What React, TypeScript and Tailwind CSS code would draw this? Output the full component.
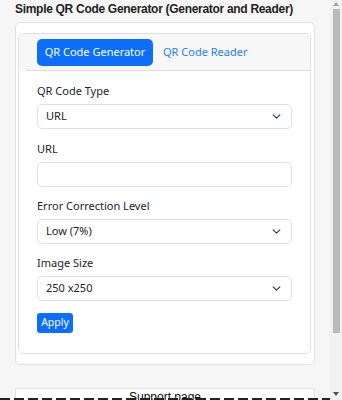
import React from "react";

const font = { fontFamily: '"Noto Sans", "Open Sans", sans-serif' };

function Chevron() {
  return (
    <svg width="9" height="9" viewBox="0 0 16 16" className="shrink-0">
      <path d="M2 5l6 6 6-6" fill="none" stroke="#343a40" strokeWidth="2" strokeLinecap="round" strokeLinejoin="round" />
    </svg>
  );
}

function SelectBox({ value }: { value: string }) {
  return (
    <div className="h-[25px] border border-[#dee2e6] rounded-[5px] bg-white flex items-center justify-between pl-[8px] pr-[10px] text-[11px] text-[#212529]">
      <span>{value}</span>
      <Chevron />
    </div>
  );
}

function Label({ children }: { children: React.ReactNode }) {
  return <div className="text-[11px] leading-[16px] text-[#212529] mb-[5px]">{children}</div>;
}

export default function App() {
  return (
    <div className="w-[342px] h-[400px] overflow-hidden bg-[#f6f6f6] flex relative">
      <div className="w-[330px] flex flex-col">
        <h1
          className="pl-[15px] pt-[1px] text-[12px] font-bold leading-[16px] text-[#222] whitespace-nowrap tracking-[-0.3px]"
          style={{ fontFamily: '"Liberation Sans", Arial, sans-serif' }}
        >
          Simple QR Code Generator (Generator and Reader)
        </h1>
        <div className="mx-[15px] mt-[5px] bg-white border border-[#e2e2e2] rounded-[5px] pt-[10px] pb-[10px] pl-[2px] pr-[3px]" style={font}>
          <div className="border border-[#e0e0e0] rounded-[6px] overflow-hidden">
            <div className="bg-[#f7f7f7] pl-[7px] pt-[5px]">
              <div className="border-b border-[#dcdcdc] flex items-center gap-[10px] pl-[11px] pb-[4px]">
                <div className="h-[27px] w-[116px] rounded-[5px] bg-[#0d6efd] text-white text-[11px] flex items-center justify-center">
                  QR Code Generator
                </div>
                <div className="text-[11px] text-[#2a7cf6]">QR Code Reader</div>
              </div>
            </div>
            <div className="px-[18px] pt-[12px] pb-[20px] bg-white">
              <Label>QR Code Type</Label>
              <SelectBox value="URL" />
              <div className="mt-[12px]">
                <Label>URL</Label>
                <div className="h-[25px] border border-[#dee2e6] rounded-[5px] bg-white" />
              </div>
              <div className="mt-[11px]">
                <Label>Error Correction Level</Label>
                <SelectBox value="Low (7%)" />
              </div>
              <div className="mt-[11px]">
                <Label>Image Size</Label>
                <SelectBox value="250 x250" />
              </div>
              <div className="mt-[12px] h-[20px] w-[36px] rounded-[3px] bg-[#0d6efd] text-white text-[10.5px] flex items-center justify-center">
                Apply
              </div>
            </div>
          </div>
        </div>
        <div
          className="mx-[15px] mt-[23px] h-[30px] bg-white border border-[#e2e2e2] flex justify-center pt-[1px] text-[12px] leading-[14px] text-[#111]"
          style={{ fontFamily: '"Liberation Sans", Arial, sans-serif' }}
        >
          Support page
        </div>
      </div>
      <div className="w-[12px] h-full bg-[#f1f1f1] flex flex-col items-center">
        <div className="h-[8px] flex items-center justify-center">
          <svg width="6" height="4" viewBox="0 0 6 4"><path d="M0 4L3 0L6 4Z" fill="#a3a3a3" /></svg>
        </div>
        <div className="w-[7px] h-[324px] mt-[1px] bg-[#b9b9b9]" />
        <div className="flex-1" />
        <div className="h-[12px] flex items-center justify-center">
          <svg width="6" height="4" viewBox="0 0 6 4"><path d="M0 0L3 4L6 0Z" fill="#505050" /></svg>
        </div>
      </div>
      <div className="absolute left-0 right-[12px] bottom-0 h-[2px] bg-[repeating-linear-gradient(90deg,#222_0px,#222_10px,transparent_10px,transparent_14px)]" />
    </div>
  );
}
